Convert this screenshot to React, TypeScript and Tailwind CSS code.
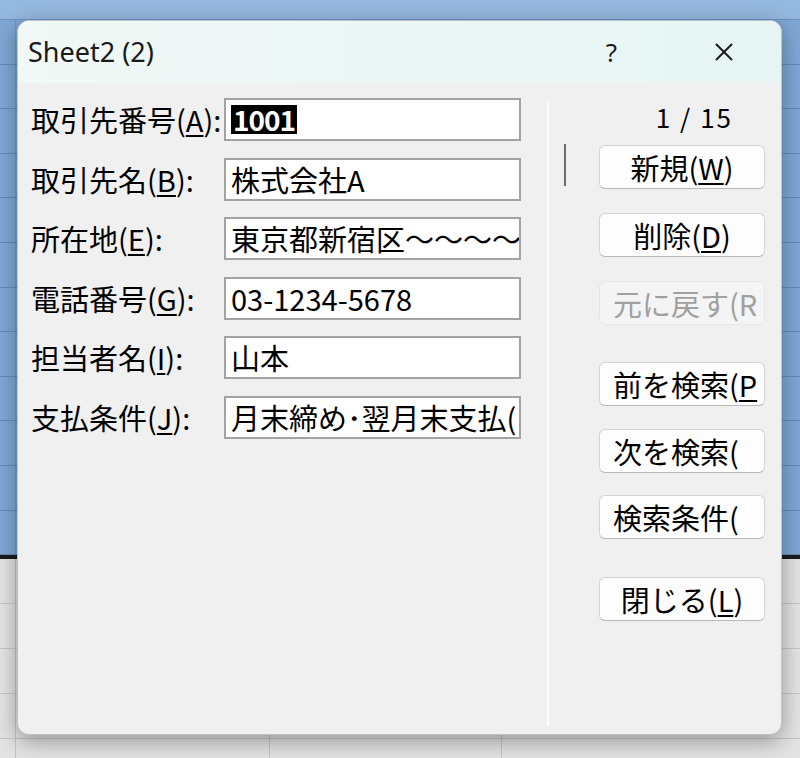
import { X } from 'lucide-react';

const jp = "font-['Noto_Sans_CJK_JP','Noto_Sans',sans-serif]";

type Field = { label: string; key: string; value: string; selected?: boolean };

const fields: Field[] = [
  { label: '取引先番号', key: 'A', value: '1001', selected: true },
  { label: '取引先名', key: 'B', value: '株式会社A' },
  { label: '所在地', key: 'E', value: '東京都新宿区〜〜〜〜' },
  { label: '電話番号', key: 'G', value: '03-1234-5678' },
  { label: '担当者名', key: 'I', value: '山本' },
  { label: '支払条件', key: 'J', value: '月末締め･翌月末支払(' },
];

// button captions are shown as far as the narrow buttons let them be read
type Btn = { text: string; key?: string; tail?: string; mt: string; disabled?: boolean; left?: boolean };

const buttons: Btn[] = [
  { text: '新規(', key: 'W', tail: ')', mt: 'mt-[14px]' },
  { text: '削除(', key: 'D', tail: ')', mt: 'mt-[24px]' },
  { text: '元に戻す(R', mt: 'mt-[24px]', disabled: true, left: true },
  { text: '前を検索(', key: 'P', mt: 'mt-[37px]', left: true },
  { text: '次を検索(', mt: 'mt-[23px]', left: true },
  { text: '検索条件(', mt: 'mt-[22px]', left: true },
  { text: '閉じる(', key: 'L', tail: ')', mt: 'mt-[38px]' },
];

function SheetRow({ blue, h }: { blue: boolean; h: string }) {
  const cell = blue ? 'border-r border-[#6f98c8]' : 'border-r border-[#c3c3c3]';
  return (
    <div className={`flex ${h} ${blue ? 'bg-[#7fa8d4] border-b border-[#5f8bc0]' : 'bg-[#e3e3e3] border-b border-[#c6c6c6]'}`}>
      <div className={`w-[16px] ${cell}`} />
      <div className={`w-[254px] ${cell}`} />
      <div className={`w-[232px] ${cell}`} />
      <div className="flex-1" />
    </div>
  );
}

export default function App() {
  return (
    <div className="relative w-[800px] h-[758px] overflow-hidden bg-[#dcdcdc]">
      {/* Spreadsheet behind the dialog */}
      <div className="flex flex-col">
        <div className="h-[20px] bg-[#95b8de] border-b border-[#6a93c4]" />
        {Array.from({ length: 12 }).map((_, i) => (
          <SheetRow key={i} blue h="h-[44.6px]" />
        ))}
        <div className="h-[4px] bg-[#1b1b1b]" />
        {Array.from({ length: 5 }).map((_, i) => (
          <SheetRow key={i} blue={false} h="h-[45px]" />
        ))}
      </div>

      {/* Dialog */}
      <div className={`absolute left-[17px] top-[20px] w-[765px] h-[715px] rounded-[12px] bg-[#f0f0f0] border border-[#b9c4cc] shadow-[0_6px_22px_rgba(0,0,0,0.35)] overflow-hidden flex flex-col ${jp}`}>
        {/* Title bar */}
        <div className="h-[62px] shrink-0 flex items-center bg-gradient-to-r from-[#f1f8f6] to-[#e6f5f4]">
          <span className="ml-[10px] text-[27px] text-[#1a1a1a] font-['Noto_Sans','Open_Sans',sans-serif]">
            Sheet2 (2)
          </span>
          <span className="ml-auto mr-[92px] text-[26px] text-[#1a1a1a] font-['Noto_Sans',sans-serif]">?</span>
          <X size={30} strokeWidth={1.6} className="mr-[42px] text-[#1a1a1a]" />
        </div>

        {/* Body */}
        <div className="flex flex-1">
          {/* Left: fields */}
          <div className="w-[529px] flex flex-col gap-[16.6px] pt-[15px] pl-[13px]">
            {fields.map((f) => (
              <div key={f.key} className="flex items-center h-[43px]">
                <div className="w-[193px] text-[29px] leading-none text-black whitespace-nowrap">
                  {f.label}(<span className="underline underline-offset-[3px]">{f.key}</span>):
                </div>
                <div className="w-[297px] h-[43px] bg-white border-2 border-[#a3a3a3] flex items-center pl-[5px] overflow-hidden">
                  {f.selected ? (
                    <span className="bg-black text-white text-[28px] leading-[29px] px-[2px] font-bold tracking-[-1px]">{f.value}</span>
                  ) : (
                    <span className="text-[29px] leading-none text-black whitespace-nowrap">{f.value}</span>
                  )}
                </div>
              </div>
            ))}
          </div>

          {/* Separator */}
          <div className="w-[2px] bg-[#fdfdfd] mt-[18px] mb-[8px]" />

          {/* Right: navigation */}
          <div className="flex">
            <div className="ml-[15px] mt-[61px] w-[2px] h-[42px] bg-[#6d6d6d]" />
            <div className="ml-[33px] w-[166px] flex flex-col">
              <div className="mt-[20px] h-[28px] flex items-center justify-end pr-[32px] text-[26px] text-black leading-none tracking-[2px]">
                1 / 15
              </div>
              {buttons.map((b) => (
                <div
                  key={b.text}
                  className={`${b.mt} h-[44px] rounded-[6px] flex items-center overflow-hidden ${
                    b.disabled
                      ? 'bg-[#f4f4f4] border border-[#e6e6e6] text-[#a0a0a0]'
                      : 'bg-[#fdfdfd] border border-[#d3d3d3] border-b-[#b8b8b8] text-black'
                  } ${b.left ? 'justify-start pl-[13px]' : 'justify-center'}`}
                >
                  <span className="text-[29px] leading-none whitespace-nowrap">
                    {b.text}
                    {b.key && <span className="underline underline-offset-[3px]">{b.key}</span>}
                    {b.tail}
                  </span>
                </div>
              ))}
            </div>
          </div>
        </div>
      </div>
    </div>
  );
}
